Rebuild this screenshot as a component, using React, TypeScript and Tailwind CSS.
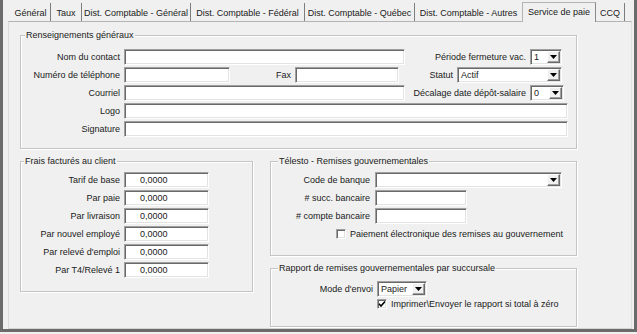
import React from "react";

const sunken =
  "bg-white border border-t-[#a0a0a0] border-l-[#a0a0a0] border-r-white border-b-white shadow-[inset_1px_1px_0_#696969,inset_-1px_-1px_0_#e3e3e3]";

function Input({ w, value, pad }: { w: string; value?: string; pad?: string }) {
  return (
    <div className={`${w} h-[16px] ${sunken} flex items-center`}>
      {value ? <span className={pad ?? "pl-[3px]"}>{value}</span> : null}
    </div>
  );
}

function Combo({ w, value }: { w: string; value?: string }) {
  return (
    <div className={`${w} h-[16px] ${sunken} flex items-center`}>
      <span className="flex-1 pl-[3px] overflow-hidden whitespace-nowrap">{value ?? ""}</span>
      <div className="w-[13px] h-[12px] mr-[1px] bg-[#f0f0f0] border border-t-white border-l-white border-r-[#696969] border-b-[#696969] shadow-[inset_-1px_-1px_0_#a0a0a0] flex items-center justify-center">
        <svg width="7" height="4" viewBox="0 0 7 4">
          <path d="M0 0h7L3.5 4z" fill="#000" />
        </svg>
      </div>
    </div>
  );
}

function Check({ checked }: { checked?: boolean }) {
  return (
    <div className={`w-[10px] h-[10px] ${sunken} flex items-center justify-center`}>
      {checked ? (
        <svg width="8" height="8" viewBox="0 0 8 8">
          <path d="M1 3.8L3 6 7 1.5" stroke="#000" strokeWidth="1.6" fill="none" />
        </svg>
      ) : null}
    </div>
  );
}

function Group({
  cls,
  legend,
  legendPos,
  children,
}: {
  cls: string;
  legend: string;
  legendPos: string;
  children?: React.ReactNode;
}) {
  return (
    <div
      className={`relative border border-[#c4c4c4] shadow-[1px_1px_0_#fff,inset_1px_1px_0_#fff] ${cls}`}
    >
      <span className={`absolute top-[-6px] ${legendPos} px-[1px] bg-[#f0f0f0] whitespace-nowrap`}>
        {legend}
      </span>
      {children}
    </div>
  );
}

function Tab({ w, label, sep = true }: { w: string; label: string; sep?: boolean }) {
  return (
    <div
      className={`${w} h-[18px] pt-[2px] flex items-center justify-center whitespace-nowrap ${
        sep ? "border-r border-r-[#7d7d7d]" : ""
      }`}
    >
      {label}
    </div>
  );
}

export default function App() {
  return (
    <div className="w-[637px] h-[334px] bg-[#f0f0f0] font-['Liberation_Sans',Arial,sans-serif] text-[9px] leading-[11px] text-[#1a1a1a]">
      <div className="w-[637px] h-[332px] border-l-[3px] border-r-[3px] border-b-[3px] border-[#6b6b6b] flex flex-col">
        {/* Tab strip */}
        <div className="h-[21px] flex items-end pl-[8px]">
          <Tab w="w-[40px]" label="Général" />
          <Tab w="w-[31px]" label="Taux" />
          <Tab w="w-[109px]" label="Dist. Comptable - Général" />
          <Tab w="w-[114px]" label="Dist. Comptable - Fédéral" />
          <Tab w="w-[110px]" label="Dist. Comptable - Québec" />
          <Tab w="w-[107px]" label="Dist. Comptable - Autres" sep={false} />
          <div className="relative z-10 -mb-[1px] w-[74px] h-[20px] bg-[#f0f0f0] border-t border-l border-r border-t-[#b4b4b4] border-l-[#b4b4b4] border-r-[#8a8a8a] flex items-center justify-center whitespace-nowrap">
            Service de paie
          </div>
          <Tab w="w-[29px]" label="CCQ" />
        </div>

        {/* Panel */}
        <div className="ml-[5px] w-[624px] flex-1 border border-t-[#b4b4b4] border-l-[#dcdcdc] border-r-[#e0e0e0] border-b-[#d4d4d4] flex flex-col">
          {/* Renseignements généraux */}
          <Group
            cls="mt-[13px] ml-[11px] w-[557px] h-[114px] pt-[13px]"
            legend="Renseignements généraux"
            legendPos="left-[4px]"
          >
            <div className="flex flex-col gap-[2px]">
              <div className="flex items-center h-[16px]">
                <div className="w-[99px] text-right">Nom du contact</div>
                <div className="ml-[4px]">
                  <Input w="w-[281px]" />
                </div>
                <div className="flex-1 flex items-center justify-end pr-[14px]">
                  <span className="whitespace-nowrap">Période fermeture vac.</span>
                  <div className="ml-[4px]">
                    <Combo w="w-[32px]" value="1" />
                  </div>
                </div>
              </div>
              <div className="flex items-center h-[16px]">
                <div className="w-[99px] text-right">Numéro de téléphone</div>
                <div className="ml-[4px]">
                  <Input w="w-[106px]" />
                </div>
                <div className="w-[61px] text-right">Fax</div>
                <div className="ml-[4px]">
                  <Input w="w-[104px]" />
                </div>
                <div className="flex-1 flex items-center justify-end pr-[14px]">
                  <span>Statut</span>
                  <div className="ml-[4px]">
                    <Combo w="w-[105px]" value="Actif" />
                  </div>
                </div>
              </div>
              <div className="flex items-center h-[16px]">
                <div className="w-[99px] text-right">Courriel</div>
                <div className="ml-[4px]">
                  <Input w="w-[281px]" />
                </div>
                <div className="flex-1 flex items-center justify-end pr-[12px]">
                  <span className="whitespace-nowrap">Décalage date dépôt-salaire</span>
                  <div className="ml-[4px]">
                    <Combo w="w-[34px]" value="0" />
                  </div>
                </div>
              </div>
              <div className="flex items-center h-[16px]">
                <div className="w-[99px] text-right">Logo</div>
                <div className="ml-[4px]">
                  <Input w="w-[444px]" />
                </div>
              </div>
              <div className="flex items-center h-[16px]">
                <div className="w-[99px] text-right">Signature</div>
                <div className="ml-[4px]">
                  <Input w="w-[444px]" />
                </div>
              </div>
            </div>
          </Group>

          <div className="mt-[12px] flex items-start">
            {/* Frais facturés au client */}
            <Group
              cls="ml-[11px] w-[233px] h-[131px] pt-[10px]"
              legend="Frais facturés au client"
              legendPos="left-[3px]"
            >
              <div className="flex flex-col gap-[2px]">
                {[
                  "Tarif de base",
                  "Par paie",
                  "Par livraison",
                  "Par nouvel employé",
                  "Par relevé d'emploi",
                  "Par T4/Relevé 1",
                ].map((l) => (
                  <div key={l} className="flex items-center h-[16px]">
                    <div className="w-[99px] text-right whitespace-nowrap">{l}</div>
                    <div className="ml-[4px]">
                      <Input w="w-[85px]" value="0,0000" pad="pl-[15px]" />
                    </div>
                  </div>
                ))}
              </div>
            </Group>

            <div className="ml-[17px] flex flex-col">
              {/* Télesto */}
              <Group
                cls="w-[307px] h-[95px] pt-[10px]"
                legend="Télesto - Remises gouvernementales"
                legendPos="left-[7px]"
              >
                <div className="flex flex-col gap-[2px]">
                  <div className="flex items-center h-[16px]">
                    <div className="w-[99px] text-right">Code de banque</div>
                    <div className="ml-[5px]">
                      <Combo w="w-[187px]" />
                    </div>
                  </div>
                  <div className="flex items-center h-[16px]">
                    <div className="w-[99px] text-right"># succ. bancaire</div>
                    <div className="ml-[5px]">
                      <Input w="w-[92px]" />
                    </div>
                  </div>
                  <div className="flex items-center h-[16px]">
                    <div className="w-[99px] text-right"># compte bancaire</div>
                    <div className="ml-[5px]">
                      <Input w="w-[92px]" />
                    </div>
                  </div>
                </div>
                <div className="mt-[4px] pl-[65px] flex items-center h-[12px]">
                  <Check />
                  <span className="ml-[4px] whitespace-nowrap">
                    Paiement électronique des remises au gouvernement
                  </span>
                </div>
              </Group>

              {/* Rapport */}
              <Group
                cls="mt-[12px] w-[307px] h-[59px] pt-[12px]"
                legend="Rapport de remises gouvernementales par succursale"
                legendPos="left-[7px]"
              >
                <div className="flex items-center h-[16px]">
                  <div className="w-[102px] text-right">Mode d'envoi</div>
                  <div className="ml-[4px]">
                    <Combo w="w-[50px]" value="Papier" />
                  </div>
                </div>
                <div className="mt-[1px] pl-[106px] flex items-center h-[12px]">
                  <Check checked />
                  <span className="ml-[4px] whitespace-nowrap">
                    Imprimer\Envoyer le rapport si total à zéro
                  </span>
                </div>
              </Group>
            </div>
          </div>
        </div>
      </div>
    </div>
  );
}
